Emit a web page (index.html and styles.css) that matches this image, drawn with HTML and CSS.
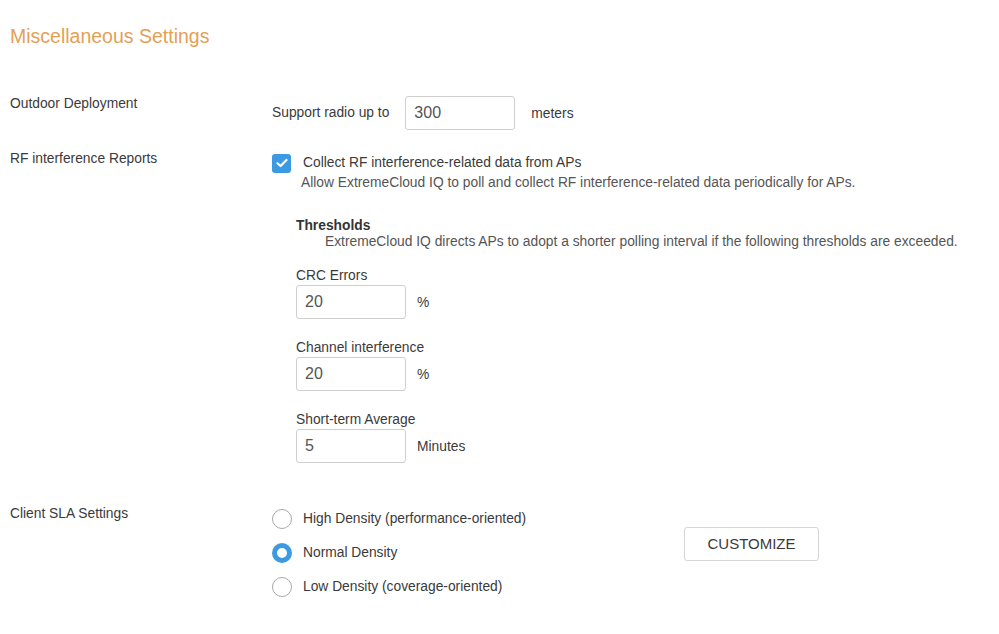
FILE: index.html
```html
<!DOCTYPE html>
<html>
<head>
<meta charset="utf-8">
<link rel="stylesheet" href="styles.css">
</head>
<body>
<div class="page">
  <h1 class="title">Miscellaneous Settings</h1>

  <div class="row row-outdoor">
    <div class="row-label">Outdoor Deployment</div>
    <div class="row-body inline">
      <span class="text">Support radio up to</span>
      <div class="input input-wide">300</div>
      <span class="unit unit-wide">meters</span>
    </div>
  </div>

  <div class="row row-rf">
    <div class="row-label">RF interference Reports</div>
    <div class="row-body">
      <div class="check-line">
        <span class="checkbox">
          <svg width="12" height="10" viewBox="0 0 12 10"><path d="M1.5 5.2 L4.6 8 L10.5 2" fill="none" stroke="#fff" stroke-width="2.2" stroke-linecap="round" stroke-linejoin="round"/></svg>
        </span>
        <span class="text">Collect RF interference-related data from APs</span>
      </div>
      <div class="desc check-desc">Allow ExtremeCloud IQ to poll and collect RF interference-related data periodically for APs.</div>

      <div class="thresholds">
        <div class="th-title">Thresholds</div>
        <div class="desc th-desc">ExtremeCloud IQ directs APs to adopt a shorter polling interval if the following thresholds are exceeded.</div>

        <div class="field">
          <div class="field-label">CRC Errors</div>
          <div class="inline">
            <div class="input">20</div>
            <span class="unit">%</span>
          </div>
        </div>
        <div class="field">
          <div class="field-label">Channel interference</div>
          <div class="inline">
            <div class="input">20</div>
            <span class="unit">%</span>
          </div>
        </div>
        <div class="field">
          <div class="field-label">Short-term Average</div>
          <div class="inline">
            <div class="input">5</div>
            <span class="unit">Minutes</span>
          </div>
        </div>
      </div>
    </div>
  </div>

  <div class="row row-sla">
    <div class="row-label">Client SLA Settings</div>
    <div class="row-body sla-body">
      <div class="radios">
        <div class="radio-line"><span class="radio"></span><span class="text">High Density (performance-oriented)</span></div>
        <div class="radio-line"><span class="radio checked"></span><span class="text">Normal Density</span></div>
        <div class="radio-line"><span class="radio"></span><span class="text">Low Density (coverage-oriented)</span></div>
      </div>
      <div class="button">CUSTOMIZE</div>
    </div>
  </div>
</div>
</body>
</html>
```

FILE: styles.css
```css
* { box-sizing: border-box; }
html, body { margin: 0; padding: 0; background: #fff; }
body {
  font-family: "Liberation Sans", Arial, sans-serif;
  font-size: 13.8px;
  color: #3a3a3a;
}
.page { padding: 0 10px; width: 999px; }

.title {
  margin: 25px 0 0 0;
  font-size: 19.5px;
  line-height: 22px;
  font-weight: normal;
  color: #e59f55;
}

.row { display: flex; align-items: flex-start; }
.row-label {
  width: 262px;
  flex: none;
  line-height: 20px;
  color: #3a3a3a;
}
.row-body { flex: 1; }
.inline { display: flex; align-items: center; }
.text { line-height: 20px; }

.row-outdoor { margin-top: 47px; }
.row-outdoor .row-body { padding-top: 2px; }
.input {
  width: 110px;
  height: 34px;
  border: 1px solid #cfcfcf;
  border-radius: 3px;
  font-size: 16px;
  line-height: 32px;
  padding-left: 8px;
  color: #555;
  flex: none;
}
.input-wide { margin-left: 16px; }
.unit { margin-left: 11px; color: #3a3a3a; }
.unit-wide { margin-left: 16px; }

.row-rf { margin-top: 19px; }
.row-rf .row-body { padding-top: 4px; }
.check-line { display: flex; align-items: center; height: 20px; }
.checkbox {
  width: 19px;
  height: 19px;
  border-radius: 3px;
  background: #3b9ae1;
  display: flex;
  align-items: center;
  justify-content: center;
  margin-right: 12px;
  flex: none;
}
.desc { color: #555; line-height: 20px; }
.check-desc { padding-left: 29px; }

.thresholds { padding-left: 24px; margin-top: 25px; }
.th-title { font-weight: bold; line-height: 16px; color: #333; }
.th-desc { padding-left: 29px; line-height: 16px; }

.field { margin-top: 17px; }
.field + .field { margin-top: 20px; }
.field-label { line-height: 18px; }

.row-sla { margin-top: 41px; }
.sla-body { display: flex; align-items: flex-start; padding-top: 5px; }
.radios { width: 412px; display: flex; flex-direction: column; gap: 14px; }
.radio-line { display: flex; align-items: center; height: 20px; }
.radio {
  width: 20px;
  height: 20px;
  border-radius: 50%;
  border: 1px solid #a8a8a8;
  background: #fff;
  margin-right: 11px;
  flex: none;
}
.radio.checked { border: 5px solid #3b9ae1; }

.button {
  margin-top: 18px;
  width: 135px;
  height: 34px;
  border: 1px solid #d6d6d6;
  border-radius: 3px;
  font-size: 15px;
  line-height: 32px;
  text-align: center;
  color: #3a3a3a;
  background: #fff;
}
```
